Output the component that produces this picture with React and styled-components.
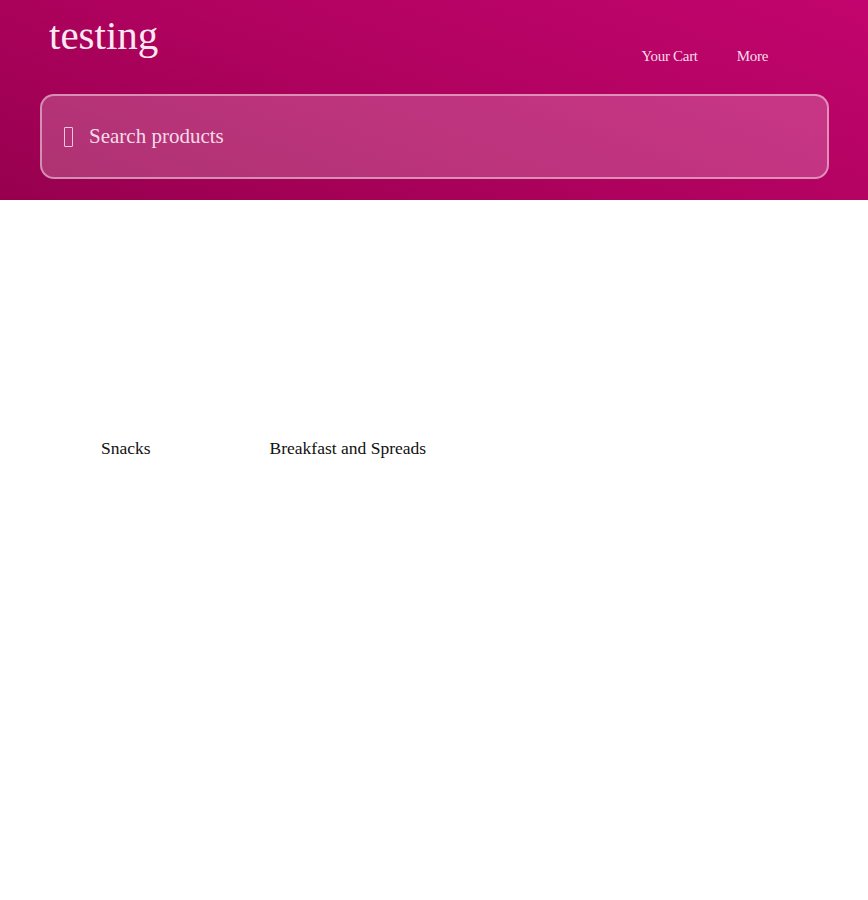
import React from "react";
import styled, { createGlobalStyle } from "styled-components";

const GlobalStyle = createGlobalStyle`
  html, body {
    margin: 0;
    padding: 0;
    background: #fff;
    font-family: "Liberation Serif", "DejaVu Serif", serif;
  }
`;

const categories = ["Snacks", "Breakfast and Spreads"];

function App() {
  return (
    <>
      <GlobalStyle />
      <Header>
        <TopRow>
          <Brand>testing</Brand>
          <Nav>
            <NavLink>Your Cart</NavLink>
            <NavLink>More</NavLink>
          </Nav>
        </TopRow>
        <SearchBox>
          <SearchIcon />
          <SearchInput placeholder="Search products" />
        </SearchBox>
      </Header>
      <Categories>
        {categories.map((name) => (
          <Category key={name}>
            <CategoryImage />
            <CategoryName>{name}</CategoryName>
          </Category>
        ))}
      </Categories>
    </>
  );
}

const Header = styled.header`
  height: 200px;
  box-sizing: border-box;
  padding: 10px 39px 0 40px;
  background: linear-gradient(200deg, #c2056e 0%, #b0025f 50%, #97004e 100%);
  display: flex;
  flex-direction: column;
`;

const TopRow = styled.div`
  display: flex;
  justify-content: space-between;
  align-items: flex-start;
  height: 84px;
`;

const Brand = styled.h1`
  margin: 0 0 0 9px;
  font-size: 41px;
  font-weight: 400;
  color: #fbe9f2;
  line-height: 50px;
`;

const Nav = styled.nav`
  display: flex;
  gap: 39px;
  margin: 38px 61px 0 0;
`;

const NavLink = styled.a`
  font-size: 15px;
  color: #f6dcea;
  letter-spacing: -0.3px;
  cursor: pointer;
`;

const SearchBox = styled.div`
  height: 85px;
  box-sizing: border-box;
  border: 2px solid rgba(255, 255, 255, 0.45);
  border-radius: 14px;
  background: rgba(255, 255, 255, 0.2);
  display: flex;
  align-items: center;
  padding: 0 22px;
  gap: 14px;
`;

const SearchIcon = styled.span`
  width: 7px;
  height: 18px;
  border: 1.5px solid rgba(255, 225, 240, 0.85);
  border-radius: 1px;
  margin-top: 1px;
`;

const SearchInput = styled.input`
  flex: 1;
  border: none;
  outline: none;
  background: transparent;
  font-family: "Liberation Serif", "DejaVu Serif", serif;
  font-size: 21px;
  color: #fff;
  &::placeholder {
    color: rgba(255, 240, 247, 0.9);
  }
`;

const Categories = styled.section`
  display: flex;
  gap: 119px;
  padding: 0 0 0 101px;
`;

const Category = styled.div`
  display: flex;
  flex-direction: column;
`;

const CategoryImage = styled.div`
  height: 238px;
`;

const CategoryName = styled.span`
  font-size: 17.5px;
  color: #111;
  line-height: 20px;
`;

export default App;
